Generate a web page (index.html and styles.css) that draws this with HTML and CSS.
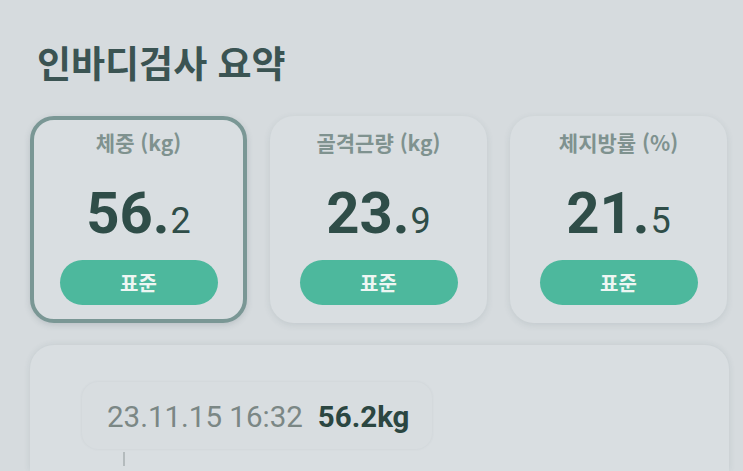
FILE: index.html
```html
<!DOCTYPE html>
<html lang="ko">
<head>
<meta charset="utf-8">
<link rel="stylesheet" href="styles.css">
</head>
<body>
<main class="page">
  <h1 class="title">인바디검사 요약</h1>
  <section class="cards">
    <div class="card card-active">
      <div class="card-label">체중 (kg)</div>
      <div class="card-value"><span class="int">56.</span><span class="dec">2</span></div>
      <div class="badge">표준</div>
    </div>
    <div class="card">
      <div class="card-label">골격근량 (kg)</div>
      <div class="card-value"><span class="int">23.</span><span class="dec">9</span></div>
      <div class="badge">표준</div>
    </div>
    <div class="card">
      <div class="card-label">체지방률 (%)</div>
      <div class="card-value"><span class="int">21.</span><span class="dec">5</span></div>
      <div class="badge">표준</div>
    </div>
  </section>
  <section class="panel">
    <div class="record">
      <span class="record-date">23.11.15 16:32</span>
      <span class="record-value">56.2kg</span>
    </div>
    <div class="tick"></div>
  </section>
</main>
</body>
</html>
```

FILE: styles.css
```css
html, body {
  margin: 0;
  padding: 0;
  background: #d6dbde;
  overflow: hidden;
}
body {
  width: 743px;
  height: 471px;
  font-family: Roboto, "Noto Sans CJK KR", sans-serif;
}
.page {
  padding: 0 14px 0 30px;
}
.title {
  margin: 0;
  padding: 39px 0 0 7px;
  height: 74px;
  box-sizing: border-box;
  font-family: "Noto Sans CJK KR", sans-serif;
  font-size: 37px;
  line-height: 46px;
  font-weight: 700;
  color: #3b5453;
  letter-spacing: 0;
}
.cards {
  margin-top: 42px;
  display: flex;
  gap: 23px;
}
.card {
  width: 217px;
  height: 207px;
  box-sizing: border-box;
  border: 4px solid transparent;
  border-radius: 24px;
  background: #d9dee1;
  box-shadow: 0 2px 7px rgba(60, 80, 90, 0.12);
  display: flex;
  flex-direction: column;
  align-items: center;
  padding: 7px 24px 0;
}
.card-active {
  border-color: #7a9795;
  box-shadow: 0 2px 6px rgba(60, 80, 90, 0.18);
}
.card-label {
  font-family: "Noto Sans CJK KR", sans-serif;
  font-size: 21px;
  line-height: 30px;
  font-weight: 700;
  color: #7f928f;
}
.card-value {
  margin-top: 23px;
  height: 66px;
  line-height: 66px;
  color: #2f4d48;
  white-space: nowrap;
}
.int {
  font-size: 58px;
  font-weight: 700;
}
.dec {
  font-size: 36px;
  font-weight: 400;
  margin-left: 1px;
}
.badge {
  margin-top: 14px;
  width: 158px;
  height: 45px;
  border-radius: 23px;
  background: #4db89d;
  color: #eef6f3;
  font-family: "Noto Sans CJK KR", sans-serif;
  font-size: 20px;
  font-weight: 700;
  line-height: 45px;
  text-align: center;
}
.panel {
  margin-top: 22px;
  width: 699px;
  height: 126px;
  box-sizing: border-box;
  border-radius: 24px 24px 0 0;
  background: #d9dee1;
  box-shadow: 0 0 6px rgba(60, 80, 90, 0.12);
  padding: 37px 0 0 52px;
}
.record {
  width: 350px;
  height: 67px;
  box-sizing: border-box;
  border-radius: 16px;
  background: #d8dde0;
  box-shadow: 0 0 3px rgba(60, 80, 90, 0.08);
  display: flex;
  align-items: center;
  padding: 2px 0 0 25px;
  gap: 15px;
  font-size: 29.5px;
  white-space: nowrap;
}
.record-date {
  color: #7b8785;
  font-weight: 400;
}
.record-value {
  color: #2b4641;
  font-weight: 700;
}
.tick {
  margin: 3px 0 0 41px;
  width: 2px;
  height: 14px;
  background: #b4bbbd;
}
```
